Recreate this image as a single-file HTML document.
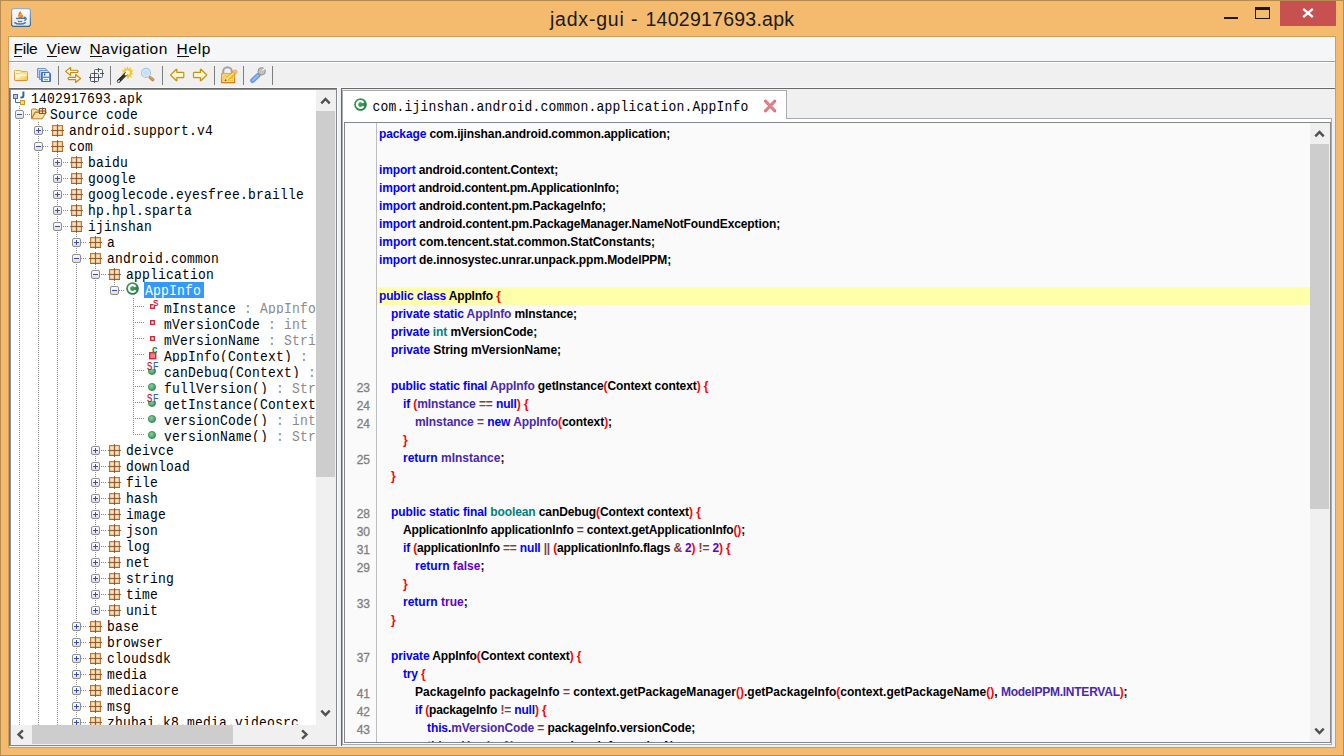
<!DOCTYPE html>
<html><head><meta charset="utf-8"><title>jadx-gui - 1402917693.apk</title>
<style>
*{box-sizing:border-box;margin:0;padding:0}
html,body{width:1344px;height:756px;overflow:hidden}
body{background:#f4ba6e;font-family:"Liberation Sans",sans-serif;position:relative}
.abs{position:absolute}
#frame{position:absolute;left:0;top:0;width:1344px;height:756px;border:1px solid #b68c50;pointer-events:none}
#title{position:absolute;left:0;top:0;width:1344px;height:37px}
#ttext{position:absolute;left:550px;top:6px;width:244px;height:26px;line-height:26px;font-size:19.5px;color:#1a1a1a;white-space:nowrap;text-align:left}
#menubar{position:absolute;left:9px;top:37px;width:1326px;height:24px;background:#f5f6f7}
.mi{position:absolute;top:0;height:24px;line-height:24px;font-size:15.5px;color:#000;white-space:nowrap}
.mi u{text-decoration:none;border-bottom:1px solid #000;padding-bottom:0px}
#mline{position:absolute;left:9px;top:61px;width:1326px;height:1px;background:#a0a0a0}
#toolbar{position:absolute;left:9px;top:62px;width:1326px;height:26px;background:#f0f0f0;border-top:1px solid #fff;border-bottom:1px solid #f9f9f9}
.sep{position:absolute;top:3px;width:1px;height:19px;background:#7e7e7e}
#main{position:absolute;left:9px;top:88px;width:1326px;height:659px;background:#f0f0f0}
.mono{font-family:"Liberation Mono",monospace;font-size:13px;letter-spacing:0.2px;white-space:pre;transform:scaleY(1.14);transform-origin:0 12px}
#tree{position:absolute;left:11px;top:90px;width:305px;height:635px;background:#fff;overflow:hidden}
.row{position:absolute;left:0;width:305px;height:16px;overflow:hidden}
.row span.t{position:absolute;top:1px;height:16px;line-height:17px;color:#000}
.row span.m{position:absolute;top:3px;height:16px;line-height:17px;color:#000}
.g{color:#8a8a8a}
.vl{position:absolute;width:1px;background-image:linear-gradient(#8c8c8c 50%,transparent 50%);background-size:1px 2px}
.hl{position:absolute;height:1px;background-image:linear-gradient(90deg,#8c8c8c 50%,transparent 50%);background-size:2px 1px}
svg{position:absolute;overflow:visible}
#code{position:absolute;left:345px;top:123px;width:965px;height:619px;background:#fafafa;overflow:hidden}
.cl{position:absolute;left:34px;height:18px;line-height:18px;font-size:12px;font-weight:bold;color:#000;white-space:pre}
.ln{position:absolute;left:0;width:25px;height:18px;line-height:18px;font-size:12px;color:#808080;-webkit-text-stroke:0.3px #808080;text-align:right;margin-top:2px}
.k{color:#0000ff}.t{}.ty{color:#008080}.p{color:#4a28ac}.l{color:#6400c8}.r{color:#ff0000}.o{color:#804040}
</style></head><body>

<svg width="0" height="0" style="position:absolute"><defs>
<linearGradient id="gh" x1="0" y1="0" x2="0" y2="1"><stop offset="0" stop-color="#ffffff"/><stop offset="1" stop-color="#dcdcdc"/></linearGradient>
<linearGradient id="gf" x1="0" y1="0" x2="0" y2="1"><stop offset="0" stop-color="#fdf0c0"/><stop offset="1" stop-color="#f0c860"/></linearGradient>
<linearGradient id="gar" x1="0" y1="0" x2="0" y2="1"><stop offset="0" stop-color="#fff6cc"/><stop offset="1" stop-color="#f5d67a"/></linearGradient>
<radialGradient id="gc" cx="0.4" cy="0.35" r="0.7"><stop offset="0" stop-color="#4aa862"/><stop offset="1" stop-color="#1f7a3a"/></radialGradient>
<radialGradient id="gm" cx="0.4" cy="0.35" r="0.7"><stop offset="0" stop-color="#8fd0a0"/><stop offset="1" stop-color="#2f9555"/></radialGradient>
<symbol id="pkg" viewBox="0 0 13 13"><rect x="1.5" y="1.5" width="10" height="10" fill="#eac08a" stroke="#c47c2c"/><rect x="1" y="11" width="11" height="1" fill="#b4601a"/><rect x="2.8" y="2.8" width="2.6" height="2.6" rx="0.6" fill="#f8e6c2"/><rect x="7.6" y="2.8" width="2.6" height="2.6" rx="0.6" fill="#f8e6c2"/><rect x="2.8" y="7.6" width="2.6" height="2.6" rx="0.6" fill="#f8e6c2"/><rect x="7.6" y="7.6" width="2.6" height="2.6" rx="0.6" fill="#f8e6c2"/><path d="M0 6.5H13M6.5 0V13" stroke="#8a4c2a" stroke-width="1" fill="none" opacity="0.85"/></symbol>
<symbol id="hp" viewBox="0 0 9 9"><rect x="0.5" y="0.5" width="8" height="8" rx="1.5" fill="url(#gh)" stroke="#8f8f8f"/><path d="M2 4.5H7M4.5 2V7" stroke="#3a50a8" stroke-width="1" fill="none"/></symbol>
<symbol id="hm" viewBox="0 0 9 9"><rect x="0.5" y="0.5" width="8" height="8" rx="1.5" fill="url(#gh)" stroke="#8f8f8f"/><path d="M2 4.5H7" stroke="#3a50a8" stroke-width="1" fill="none"/></symbol>
<symbol id="cls" viewBox="0 0 13 13"><circle cx="6.5" cy="6.5" r="6.3" fill="url(#gc)"/><path d="M9.5 4.7A3.5 3.5 0 1 0 9.5 8.3" stroke="#fff" stroke-width="2.2" fill="none"/></symbol>
<symbol id="mth" viewBox="0 0 8 8"><circle cx="4" cy="4" r="3.6" fill="url(#gm)" stroke="#2c8c4e" stroke-width="0.8"/></symbol>
</defs></svg>
<div id="title">
<svg style="left:11px;top:8px" width="20" height="19" viewBox="0 0 20 19">
<defs><linearGradient id="jb" x1="0" y1="0" x2="0" y2="1"><stop offset="0" stop-color="#93afcd"/><stop offset="1" stop-color="#3c658e"/></linearGradient>
<linearGradient id="jf" x1="0" y1="0" x2="0" y2="1"><stop offset="0" stop-color="#ffffff"/><stop offset="1" stop-color="#e6e6e8"/></linearGradient></defs>
<path d="M2 0.6H18L19.4 2V17L18 18.4H2L0.6 17V2Z" fill="url(#jf)" stroke="url(#jb)" stroke-width="1.2"/>
<path d="M9.8 2.8C7.6 4.2 6.6 7 7.6 9.9H11.6C12.2 8.8 11.4 7.8 12.2 6.8C11.2 7 10.5 6.4 11 5.3C10 5.1 9.5 4 9.8 2.8Z" fill="#e8811e"/>
<circle cx="10" cy="6.8" r="0.7" fill="#fbe3c8"/><circle cx="8.8" cy="8.4" r="0.5" fill="#f6c08a"/>
<path d="M5 10.4H14.6" stroke="#4b78a4" stroke-width="1.3" fill="none"/>
<path d="M4.6 10.4L6 9.8V11Z" fill="#4b78a4"/>
<path d="M12.6 9.3C15.8 8.8 15.8 12.2 13.2 12.4" stroke="#4b78a4" stroke-width="1.4" fill="none"/>
<path d="M6.4 11.4C6.8 12.6 7.4 13.2 8 13.4" stroke="#9ab2cc" stroke-width="0.8" fill="none"/>
<path d="M7 13.5H11.2" stroke="#4b78a4" stroke-width="1.2" fill="none"/>
<path d="M3.4 14.3C6.4 16.7 11.8 16.7 14.8 14.3" stroke="#4b78a4" stroke-width="1.5" fill="none"/>
</svg>
<div id="ttext"><span style="position:absolute;left:0;letter-spacing:0.78px">jadx-gui</span><span style="position:absolute;left:81px">-</span><span style="position:absolute;left:95.5px;letter-spacing:0.25px">1402917693.apk</span></div>
<div class="abs" style="left:1224px;top:17px;width:14px;height:2px;background:#1a1a1a"></div>
<div class="abs" style="left:1255px;top:7px;width:15px;height:12px;border:1px solid #1a1a1a;border-top-width:3px"></div>
<div class="abs" style="left:1280px;top:1px;width:56px;height:25px;background:#c75050"></div>
<svg style="left:1302px;top:8px" width="12" height="10" viewBox="0 0 12 10"><path d="M1.2 0.8L10.8 9.2M10.8 0.8L1.2 9.2" stroke="#fff" stroke-width="2.3" fill="none"/></svg>
</div>
<div class="abs" style="left:8px;top:36px;width:1328px;height:712px;border:1px solid #d09c56"></div>
<div id="menubar">
<span class="mi" style="left:4.6px;letter-spacing:-0.3px">File<i style="position:absolute;left:0.5px;top:19px;width:7.5px;height:1px;background:#111"></i></span>
<span class="mi" style="left:37.6px;letter-spacing:0.3px">View<i style="position:absolute;left:0.5px;top:19px;width:10px;height:1px;background:#111"></i></span>
<span class="mi" style="left:80.6px;letter-spacing:0.5px">Navigation<i style="position:absolute;left:0.5px;top:19px;width:11.5px;height:1px;background:#111"></i></span>
<span class="mi" style="left:167.6px;letter-spacing:0.63px">Help<i style="position:absolute;left:0.5px;top:19px;width:11.5px;height:1px;background:#111"></i></span>
</div><div id="mline"></div>
<div id="toolbar">
<div class="sep" style="left:49px"></div>
<div class="sep" style="left:101px"></div>
<div class="sep" style="left:153px"></div>
<div class="sep" style="left:205px"></div>
<div class="sep" style="left:234px"></div>
<div class="sep" style="left:263px"></div>
</div>
<svg style="left:0;top:0" width="300" height="92" viewBox="0 0 300 92">
<defs>
<linearGradient id="gfo" x1="0" y1="0" x2="0" y2="1"><stop offset="0" stop-color="#e9ae45"/><stop offset="1" stop-color="#e08c34"/></linearGradient>
<linearGradient id="gfi" x1="0" y1="0" x2="1" y2="1"><stop offset="0" stop-color="#fffdf2"/><stop offset="0.45" stop-color="#fbeeb0"/><stop offset="1" stop-color="#edc630"/></linearGradient>
<linearGradient id="gar2" x1="0" y1="0" x2="0" y2="1"><stop offset="0" stop-color="#fbe8a4"/><stop offset="0.45" stop-color="#fffbe6"/><stop offset="1" stop-color="#f7d772"/></linearGradient>
<linearGradient id="glk" x1="0" y1="0" x2="0" y2="1"><stop offset="0" stop-color="#ecaa2c"/><stop offset="1" stop-color="#df7a10"/></linearGradient>
<radialGradient id="glens" cx="0.5" cy="0.5" r="0.6"><stop offset="0" stop-color="#c3dbf5"/><stop offset="1" stop-color="#d3e5f8"/></radialGradient>
</defs>
<!-- open folder -->
<path d="M14.5 71.2Q14.5 70.5 15.2 70.5H20.3Q21 70.5 21 71.2V71.5H26.8Q27.5 71.5 27.5 72.2V79.8Q27.5 80.5 26.8 80.5H15.2Q14.5 80.5 14.5 79.8Z" fill="url(#gfi)" stroke="url(#gfo)" stroke-width="1"/>
<path d="M16 73.5H19.5L20.5 72.8H26" stroke="#f3cf74" stroke-width="1" fill="none"/>
<path d="M15.5 76.2H19.5L20.5 75.2H26.5" stroke="#fff" stroke-width="1" fill="none" opacity="0.9"/>
<!-- save all -->
<path d="M37.5 68.5H45.5L46.5 69.5V77.5H37.5Z" fill="#b8cdf0" stroke="#6d95d8"/>
<path d="M38.8 70H45" stroke="#eef3fc" stroke-width="1"/>
<path d="M39.5 70.5H47.5L48.5 71.5V79.5H39.5Z" fill="#b8cdf0" stroke="#6d95d8"/>
<path d="M40.8 72H47" stroke="#eef3fc" stroke-width="1"/>
<path d="M41.5 72.5H49.3L50.5 73.7V81.5H41.5Z" fill="#5c8cdc" stroke="#3f6ec4"/>
<rect x="43" y="73" width="6" height="3.6" fill="#f2f6fd"/>
<rect x="44" y="73.4" width="1.3" height="2.2" fill="#2f5cb4"/>
<rect x="43" y="78" width="6" height="3" fill="#f4f7fc"/>
<rect x="44" y="79" width="4" height="1.3" fill="#86c83c"/>
<!-- sync -->
<path d="M65.6 71.4L70.6 67.4V70.3H77.4L78.2 71.4L77.4 72.5H70.6V75.4Z" fill="url(#gar2)" stroke="#c48a10" stroke-width="1.1" stroke-linejoin="round"/>
<path d="M80.6 78.5L75.6 74.5V77.4H68.8L68 78.5L68.8 79.6H75.6V82.5Z" fill="url(#gar2)" stroke="#c48a10" stroke-width="1.1" stroke-linejoin="round"/>
<!-- flatten packages -->
<rect x="94.5" y="69.5" width="8" height="8" rx="1" fill="#edf2fc" stroke="#606060"/>
<path d="M98.5 68V72M100 73.5H104" stroke="#505050" stroke-width="1"/>
<rect x="90.5" y="73.5" width="8" height="8" rx="1" fill="#eef3fc" stroke="#555"/>
<path d="M94.5 72V83M89 77.5H100" stroke="#505050" stroke-width="1"/>
<!-- wand -->
<path d="M127.6 66.6L128.7 69.6L131 67.6L130.5 70.6L133 70.2L131.2 72.4L133 74L130.6 74.4L131.4 77.2L129 75.8L128 78.8L126.6 76L124.2 77.4L124.8 74.6L121.8 74.2L124 72.4L122 70.2L125 70.4L124.6 67.6L126.8 69.4Z" fill="#f7c61e" stroke="#f3b50c" stroke-width="0.3"/>
<circle cx="127.6" cy="72.6" r="2.4" fill="#fdf3c4"/>
<path d="M118.6 81.2L126 73.9" stroke="#262626" stroke-width="3.4" stroke-linecap="round"/>
<path d="M118.4 81.6L119.2 80.8" stroke="#e8e8e8" stroke-width="1.6" stroke-linecap="round"/>
<path d="M120.6 79.9L125 75.5" stroke="#6a6a6a" stroke-width="1" stroke-dasharray="0.7 0.7"/>
<path d="M125.8 74.3L127.2 72.9" stroke="#fafafa" stroke-width="2.4" stroke-linecap="round"/>
<!-- magnifier -->
<path d="M150 77.4L152.8 79.8" stroke="#c58a3e" stroke-width="3.2" stroke-linecap="round"/>
<path d="M150.4 77.2L152.6 79.2" stroke="#e2b87e" stroke-width="1" stroke-linecap="round"/>
<circle cx="146" cy="72.9" r="4.5" fill="url(#glens)" stroke="#a4c6ee" stroke-width="1.2"/>
<circle cx="146" cy="72.9" r="3.4" fill="none" stroke="#e1edfa" stroke-width="0.6"/>
<!-- back / forward -->
<path d="M170.5 75L176.4 69.3H176.9V72.4H183.3L183.8 72.9V77.1L183.3 77.6H176.9V80.7H176.4Z" fill="url(#gar2)" stroke="#c4940f" stroke-width="1.2" stroke-linejoin="round"/>
<path d="M206.8 75L200.9 69.3H200.4V72.4H194L193.5 72.9V77.1L194 77.6H200.4V80.7H200.9Z" fill="url(#gar2)" stroke="#c4940f" stroke-width="1.2" stroke-linejoin="round"/>
<!-- lock + pencil -->
<path d="M223.2 73.6V71.6A4.3 4.3 0 0 1 231.8 71.6V73.6" fill="none" stroke="#a2a2a2" stroke-width="2.1"/>
<rect x="221.6" y="73.6" width="13" height="9" fill="#fbe494" stroke="url(#glk)" stroke-width="1.3"/>
<rect x="223.2" y="75.2" width="9.8" height="5.8" fill="#f6c64a"/>
<path d="M224 79.4H232.4M224 77.2H228" stroke="#fbe7a6" stroke-width="0.8"/>
<path d="M227.4 78.8L234.4 72.6" stroke="#d79a22" stroke-width="3.8"/>
<path d="M227.4 78.8L234.4 72.6" stroke="#f5d646" stroke-width="2.3"/>
<path d="M227.2 78.2L233.8 72.4" stroke="#fbf1a4" stroke-width="0.8"/>
<circle cx="235.2" cy="71.8" r="1.8" fill="#f5bda2" stroke="#e8964a" stroke-width="0.8"/>
<path d="M224.8 80.8L226.2 77.6L228.8 80Z" fill="#f3d2b4"/>
<path d="M224.7 80.9L225.5 79.2L226.6 80.2Z" fill="#241a12"/>
<!-- wrench -->
<path d="M252.6 80.6L258.2 75.2" stroke="#5f96e6" stroke-width="4.8" stroke-linecap="round"/>
<path d="M252.8 80.4L258 75.4" stroke="#92b9f2" stroke-width="2.2" stroke-linecap="round"/>
<path d="M258.6 75.4L260.4 73.6" stroke="#9c9c9c" stroke-width="2.4"/>
<circle cx="261.7" cy="71.3" r="3.7" fill="#c2c2c2" stroke="#8a8a8a" stroke-width="0.9"/>
<path d="M262.3 70.7L266.4 66.6" stroke="#f0f0f0" stroke-width="2.5"/>
<path d="M261.6 69.9L263.6 67.9M263.1 71.4L265.1 69.4" stroke="#8a8a8a" stroke-width="0.7"/>
</svg>
<div id="main"></div>
<div class="abs" style="left:9px;top:88px;width:329px;height:1px;background:#696969"></div>
<div class="abs" style="left:9px;top:89px;width:328px;height:1px;background:#8f949b"></div>
<div class="abs" style="left:9px;top:88px;width:1px;height:658px;background:#6a7280"></div>
<div class="abs" style="left:10px;top:89px;width:1px;height:656px;background:#8e95a0"></div>
<div class="abs" style="left:11px;top:90px;width:325px;height:655px;background:#fff"></div>
<div class="abs" style="left:336px;top:89px;width:1px;height:657px;background:#828790"></div>
<div class="abs" style="left:337px;top:88px;width:1px;height:658px;background:#fcfcfc"></div>
<div class="abs" style="left:10px;top:745px;width:327px;height:1px;background:#828790"></div>
<div id="tree">
<div class="vl" style="left:8px;top:16px;height:4px"></div>
<div class="vl" style="left:8px;top:30px;height:605px"></div>
<div class="vl" style="left:27px;top:32px;height:603px"></div>
<div class="vl" style="left:46px;top:64px;height:571px"></div>
<div class="vl" style="left:65px;top:144px;height:491px"></div>
<div class="vl" style="left:84px;top:176px;height:348px"></div>
<div class="vl" style="left:103px;top:192px;height:4px"></div>
<div class="vl" style="left:122px;top:208px;height:137px"></div>
<div class="hl" style="left:14px;top:24px;width:5px"></div>
<div class="hl" style="left:32px;top:40px;width:6px"></div>
<div class="hl" style="left:32px;top:56px;width:6px"></div>
<div class="hl" style="left:52px;top:72px;width:5px"></div>
<div class="hl" style="left:52px;top:88px;width:5px"></div>
<div class="hl" style="left:52px;top:104px;width:5px"></div>
<div class="hl" style="left:52px;top:120px;width:5px"></div>
<div class="hl" style="left:52px;top:136px;width:5px"></div>
<div class="hl" style="left:70px;top:152px;width:6px"></div>
<div class="hl" style="left:70px;top:168px;width:6px"></div>
<div class="hl" style="left:90px;top:184px;width:5px"></div>
<div class="hl" style="left:108px;top:200px;width:6px"></div>
<div class="hl" style="left:124px;top:216px;width:10px"></div>
<div class="hl" style="left:124px;top:232px;width:10px"></div>
<div class="hl" style="left:124px;top:248px;width:10px"></div>
<div class="hl" style="left:124px;top:264px;width:10px"></div>
<div class="hl" style="left:124px;top:280px;width:10px"></div>
<div class="hl" style="left:124px;top:296px;width:10px"></div>
<div class="hl" style="left:124px;top:312px;width:10px"></div>
<div class="hl" style="left:124px;top:328px;width:10px"></div>
<div class="hl" style="left:124px;top:344px;width:10px"></div>
<div class="hl" style="left:90px;top:360px;width:5px"></div>
<div class="hl" style="left:90px;top:376px;width:5px"></div>
<div class="hl" style="left:90px;top:392px;width:5px"></div>
<div class="hl" style="left:90px;top:408px;width:5px"></div>
<div class="hl" style="left:90px;top:424px;width:5px"></div>
<div class="hl" style="left:90px;top:440px;width:5px"></div>
<div class="hl" style="left:90px;top:456px;width:5px"></div>
<div class="hl" style="left:90px;top:472px;width:5px"></div>
<div class="hl" style="left:90px;top:488px;width:5px"></div>
<div class="hl" style="left:90px;top:504px;width:5px"></div>
<div class="hl" style="left:90px;top:520px;width:5px"></div>
<div class="hl" style="left:70px;top:536px;width:6px"></div>
<div class="hl" style="left:70px;top:552px;width:6px"></div>
<div class="hl" style="left:70px;top:568px;width:6px"></div>
<div class="hl" style="left:70px;top:584px;width:6px"></div>
<div class="hl" style="left:70px;top:600px;width:6px"></div>
<div class="hl" style="left:70px;top:616px;width:6px"></div>
<div class="hl" style="left:70px;top:632px;width:6px"></div>
<div class="row" style="top:0px">
<svg style="left:1px;top:1px" width="14" height="15" viewBox="0 0 14 15"><rect x="1.5" y="3.5" width="4" height="4" fill="#b9c6de" stroke="#4a6fa8"/><path d="M3.5 8V11.5H8" stroke="#3b6cb0" fill="none"/><rect x="8.5" y="9.5" width="4" height="4" fill="#f5d878" stroke="#c99a20"/><path d="M11.4 0.4V4.6Q11.4 6.6 9.6 6.6H8.4" stroke="#2d66a8" stroke-width="2" fill="none"/></svg>
<span class="t mono" style="left:20px">1402917693.apk</span>
</div>
<div class="row" style="top:16px">
<svg style="left:4px;top:4px" width="9" height="9"><use href="#hm"/></svg>
<svg style="left:20px;top:1px" width="16" height="13" viewBox="0 0 16 13"><path d="M0.5 11.5V3Q0.5 2 1.5 2H5L6 3H10V5H4L0.5 11.5Z" fill="#f7dfa0" stroke="#c07a2c" stroke-linejoin="round"/><path d="M0.8 11.8L4.4 5.4H15.4L11.2 11.8Z" fill="#f9e2a4" stroke="#c07a2c" stroke-linejoin="round"/><rect x="8.5" y="1.5" width="6" height="5" fill="#f6e0b4" stroke="#8d5430"/><path d="M7.5 4H15.5M11.5 0.5V7" stroke="#8d5430"/></svg>
<span class="t mono" style="left:39px">Source code</span>
</div>
<div class="row" style="top:32px">
<svg style="left:23px;top:4px" width="9" height="9"><use href="#hp"/></svg>
<svg style="left:40px;top:2px" width="13" height="13"><use href="#pkg"/></svg>
<span class="t mono" style="left:58px">android.support.v4</span>
</div>
<div class="row" style="top:48px">
<svg style="left:23px;top:4px" width="9" height="9"><use href="#hm"/></svg>
<svg style="left:40px;top:2px" width="13" height="13"><use href="#pkg"/></svg>
<span class="t mono" style="left:58px">com</span>
</div>
<div class="row" style="top:64px">
<svg style="left:42px;top:4px" width="9" height="9"><use href="#hp"/></svg>
<svg style="left:59px;top:2px" width="13" height="13"><use href="#pkg"/></svg>
<span class="t mono" style="left:77px">baidu</span>
</div>
<div class="row" style="top:80px">
<svg style="left:42px;top:4px" width="9" height="9"><use href="#hp"/></svg>
<svg style="left:59px;top:2px" width="13" height="13"><use href="#pkg"/></svg>
<span class="t mono" style="left:77px">google</span>
</div>
<div class="row" style="top:96px">
<svg style="left:42px;top:4px" width="9" height="9"><use href="#hp"/></svg>
<svg style="left:59px;top:2px" width="13" height="13"><use href="#pkg"/></svg>
<span class="t mono" style="left:77px">googlecode.eyesfree.braille</span>
</div>
<div class="row" style="top:112px">
<svg style="left:42px;top:4px" width="9" height="9"><use href="#hp"/></svg>
<svg style="left:59px;top:2px" width="13" height="13"><use href="#pkg"/></svg>
<span class="t mono" style="left:77px">hp.hpl.sparta</span>
</div>
<div class="row" style="top:128px">
<svg style="left:42px;top:4px" width="9" height="9"><use href="#hm"/></svg>
<svg style="left:59px;top:2px" width="13" height="13"><use href="#pkg"/></svg>
<span class="t mono" style="left:77px">ijinshan</span>
</div>
<div class="row" style="top:144px">
<svg style="left:61px;top:4px" width="9" height="9"><use href="#hp"/></svg>
<svg style="left:78px;top:2px" width="13" height="13"><use href="#pkg"/></svg>
<span class="t mono" style="left:96px">a</span>
</div>
<div class="row" style="top:160px">
<svg style="left:61px;top:4px" width="9" height="9"><use href="#hm"/></svg>
<svg style="left:78px;top:2px" width="13" height="13"><use href="#pkg"/></svg>
<span class="t mono" style="left:96px">android.common</span>
</div>
<div class="row" style="top:176px">
<svg style="left:80px;top:4px" width="9" height="9"><use href="#hm"/></svg>
<svg style="left:97px;top:2px" width="13" height="13"><use href="#pkg"/></svg>
<span class="t mono" style="left:115px">application</span>
</div>
<div class="row" style="top:192px">
<svg style="left:99px;top:4px" width="9" height="9"><use href="#hm"/></svg>
<svg style="left:115px;top:0px" width="13" height="13"><use href="#cls"/></svg>
<span class="abs" style="left:133px;top:0;width:60px;height:16px;background:#3399ff"></span>
<span class="t mono" style="left:134px;color:#fff">AppInfo</span>
</div>
<div class="row" style="top:208px">
<svg style="left:138px;top:1px" width="10" height="12" viewBox="0 0 10 12"><rect x="1.7" y="5.7" width="3.6" height="3.6" fill="#fff" stroke="#d8283c" stroke-width="1.4"/></svg>
<span class="abs" style="left:141.6px;top:0px;font-size:9.8px;color:#c8102e;-webkit-text-stroke:0.25px #c8102e;line-height:9px;height:8px;background:#fff;transform:scaleX(0.82);transform-origin:0 0">S</span>
<span class="m mono" style="left:153px">mInstance<span class="g"> : AppInfo</span></span>
</div>
<div class="row" style="top:224px">
<svg style="left:138px;top:1px" width="10" height="12" viewBox="0 0 10 12"><rect x="1.7" y="5.7" width="3.6" height="3.6" fill="#fff" stroke="#d8283c" stroke-width="1.4"/></svg>
<span class="m mono" style="left:153px">mVersionCode<span class="g"> : int</span></span>
</div>
<div class="row" style="top:240px">
<svg style="left:138px;top:1px" width="10" height="12" viewBox="0 0 10 12"><rect x="1.7" y="5.7" width="3.6" height="3.6" fill="#fff" stroke="#d8283c" stroke-width="1.4"/></svg>
<span class="m mono" style="left:153px">mVersionName<span class="g"> : String</span></span>
</div>
<div class="row" style="top:256px">
<svg style="left:138px;top:0px" width="10" height="14" viewBox="0 0 10 14"><rect x="0.7" y="6.7" width="6" height="6" fill="#f08090" stroke="#d8283c" stroke-width="1.4"/></svg>
<span class="abs" style="left:140.8px;top:-2px;font-size:11px;font-weight:bold;color:#0a8a2a;line-height:11px;height:10px;transform:scaleX(0.88);transform-origin:0 0">c</span>
<span class="m mono" style="left:153px">AppInfo(Context)<span class="g"> : void</span></span>
</div>
<div class="row" style="top:272px">
<svg style="left:137px;top:5px" width="8" height="8"><use href="#mth"/></svg>
<span class="abs" style="left:135px;top:-1px;width:12px;height:8px;background:#fff"></span>
<span class="abs" style="left:135.6px;top:0px;font-size:10px;color:#c8102e;-webkit-text-stroke:0.25px #c8102e;line-height:9px;letter-spacing:1px;transform:scaleX(0.8);transform-origin:0 0">S<span style="color:#2a5ca8;-webkit-text-stroke:0.25px #2a5ca8">F</span></span>
<span class="m mono" style="left:153px">canDebug(Context)<span class="g"> : boolean</span></span>
</div>
<div class="row" style="top:288px">
<svg style="left:137px;top:5px" width="8" height="8"><use href="#mth"/></svg>
<span class="m mono" style="left:153px">fullVersion()<span class="g"> : String</span></span>
</div>
<div class="row" style="top:304px">
<svg style="left:137px;top:5px" width="8" height="8"><use href="#mth"/></svg>
<span class="abs" style="left:135px;top:-1px;width:12px;height:8px;background:#fff"></span>
<span class="abs" style="left:135.6px;top:0px;font-size:10px;color:#c8102e;-webkit-text-stroke:0.25px #c8102e;line-height:9px;letter-spacing:1px;transform:scaleX(0.8);transform-origin:0 0">S<span style="color:#2a5ca8;-webkit-text-stroke:0.25px #2a5ca8">F</span></span>
<span class="m mono" style="left:153px">getInstance(Context)<span class="g"> : AppInfo</span></span>
</div>
<div class="row" style="top:320px">
<svg style="left:137px;top:5px" width="8" height="8"><use href="#mth"/></svg>
<span class="m mono" style="left:153px">versionCode()<span class="g"> : int</span></span>
</div>
<div class="row" style="top:336px">
<svg style="left:137px;top:5px" width="8" height="8"><use href="#mth"/></svg>
<span class="m mono" style="left:153px">versionName()<span class="g"> : String</span></span>
</div>
<div class="row" style="top:352px">
<svg style="left:80px;top:4px" width="9" height="9"><use href="#hp"/></svg>
<svg style="left:97px;top:2px" width="13" height="13"><use href="#pkg"/></svg>
<span class="t mono" style="left:115px">deivce</span>
</div>
<div class="row" style="top:368px">
<svg style="left:80px;top:4px" width="9" height="9"><use href="#hp"/></svg>
<svg style="left:97px;top:2px" width="13" height="13"><use href="#pkg"/></svg>
<span class="t mono" style="left:115px">download</span>
</div>
<div class="row" style="top:384px">
<svg style="left:80px;top:4px" width="9" height="9"><use href="#hp"/></svg>
<svg style="left:97px;top:2px" width="13" height="13"><use href="#pkg"/></svg>
<span class="t mono" style="left:115px">file</span>
</div>
<div class="row" style="top:400px">
<svg style="left:80px;top:4px" width="9" height="9"><use href="#hp"/></svg>
<svg style="left:97px;top:2px" width="13" height="13"><use href="#pkg"/></svg>
<span class="t mono" style="left:115px">hash</span>
</div>
<div class="row" style="top:416px">
<svg style="left:80px;top:4px" width="9" height="9"><use href="#hp"/></svg>
<svg style="left:97px;top:2px" width="13" height="13"><use href="#pkg"/></svg>
<span class="t mono" style="left:115px">image</span>
</div>
<div class="row" style="top:432px">
<svg style="left:80px;top:4px" width="9" height="9"><use href="#hp"/></svg>
<svg style="left:97px;top:2px" width="13" height="13"><use href="#pkg"/></svg>
<span class="t mono" style="left:115px">json</span>
</div>
<div class="row" style="top:448px">
<svg style="left:80px;top:4px" width="9" height="9"><use href="#hp"/></svg>
<svg style="left:97px;top:2px" width="13" height="13"><use href="#pkg"/></svg>
<span class="t mono" style="left:115px">log</span>
</div>
<div class="row" style="top:464px">
<svg style="left:80px;top:4px" width="9" height="9"><use href="#hp"/></svg>
<svg style="left:97px;top:2px" width="13" height="13"><use href="#pkg"/></svg>
<span class="t mono" style="left:115px">net</span>
</div>
<div class="row" style="top:480px">
<svg style="left:80px;top:4px" width="9" height="9"><use href="#hp"/></svg>
<svg style="left:97px;top:2px" width="13" height="13"><use href="#pkg"/></svg>
<span class="t mono" style="left:115px">string</span>
</div>
<div class="row" style="top:496px">
<svg style="left:80px;top:4px" width="9" height="9"><use href="#hp"/></svg>
<svg style="left:97px;top:2px" width="13" height="13"><use href="#pkg"/></svg>
<span class="t mono" style="left:115px">time</span>
</div>
<div class="row" style="top:512px">
<svg style="left:80px;top:4px" width="9" height="9"><use href="#hp"/></svg>
<svg style="left:97px;top:2px" width="13" height="13"><use href="#pkg"/></svg>
<span class="t mono" style="left:115px">unit</span>
</div>
<div class="row" style="top:528px">
<svg style="left:61px;top:4px" width="9" height="9"><use href="#hp"/></svg>
<svg style="left:78px;top:2px" width="13" height="13"><use href="#pkg"/></svg>
<span class="t mono" style="left:96px">base</span>
</div>
<div class="row" style="top:544px">
<svg style="left:61px;top:4px" width="9" height="9"><use href="#hp"/></svg>
<svg style="left:78px;top:2px" width="13" height="13"><use href="#pkg"/></svg>
<span class="t mono" style="left:96px">browser</span>
</div>
<div class="row" style="top:560px">
<svg style="left:61px;top:4px" width="9" height="9"><use href="#hp"/></svg>
<svg style="left:78px;top:2px" width="13" height="13"><use href="#pkg"/></svg>
<span class="t mono" style="left:96px">cloudsdk</span>
</div>
<div class="row" style="top:576px">
<svg style="left:61px;top:4px" width="9" height="9"><use href="#hp"/></svg>
<svg style="left:78px;top:2px" width="13" height="13"><use href="#pkg"/></svg>
<span class="t mono" style="left:96px">media</span>
</div>
<div class="row" style="top:592px">
<svg style="left:61px;top:4px" width="9" height="9"><use href="#hp"/></svg>
<svg style="left:78px;top:2px" width="13" height="13"><use href="#pkg"/></svg>
<span class="t mono" style="left:96px">mediacore</span>
</div>
<div class="row" style="top:608px">
<svg style="left:61px;top:4px" width="9" height="9"><use href="#hp"/></svg>
<svg style="left:78px;top:2px" width="13" height="13"><use href="#pkg"/></svg>
<span class="t mono" style="left:96px">msg</span>
</div>
<div class="row" style="top:624px">
<svg style="left:61px;top:4px" width="9" height="9"><use href="#hp"/></svg>
<svg style="left:78px;top:2px" width="13" height="13"><use href="#pkg"/></svg>
<span class="t mono" style="left:96px">zhuhai.k8.media.videosrc</span>
</div>
</div>
<div class="abs" style="left:316px;top:90px;width:20px;height:655px;background:#f0f0f0"></div>
<div class="abs" style="left:316px;top:111px;width:19px;height:366px;background:#cdcdcd"></div>
<svg style="left:0;top:0" width="1" height="1"><path d="M321.3 103.3L325.5 98.9L329.7 103.3" stroke="#505050" stroke-width="2.4" fill="none"/></svg>
<svg style="left:0;top:0" width="1" height="1"><path d="M321.3 710.7L325.5 715.1L329.7 710.7" stroke="#505050" stroke-width="2.4" fill="none"/></svg>
<div class="abs" style="left:11px;top:725px;width:305px;height:20px;background:#f0f0f0"></div>
<div class="abs" style="left:32px;top:725px;width:201px;height:19px;background:#cdcdcd"></div>
<svg style="left:0;top:0" width="1" height="1"><path d="M22.9 730.3L18.5 734.5L22.9 738.7" stroke="#505050" stroke-width="2.4" fill="none"/></svg>
<svg style="left:0;top:0" width="1" height="1"><path d="M302.1 730.3L306.5 734.5L302.1 738.7" stroke="#505050" stroke-width="2.4" fill="none"/></svg>
<div class="abs" style="left:341px;top:88px;width:994px;height:1px;background:#696969"></div>
<div class="abs" style="left:341px;top:88px;width:1px;height:658px;background:#696969"></div>
<div class="abs" style="left:342px;top:118px;width:990px;height:627px;background:#fff;border:1px solid #a8aab0"></div>
<div class="abs" style="left:342px;top:90px;width:445px;height:29px;background:#fff;border:1px solid #a8aab0;border-bottom:none"></div>
<svg style="left:354px;top:98px" width="13" height="13"><use href="#cls"/></svg>
<div class="abs mono" style="left:372.5px;top:99px;height:16px;line-height:17px;color:#000">com.ijinshan.android.common.application.AppInfo</div>
<svg style="left:764px;top:100px" width="12" height="12" viewBox="0 0 12 12"><path d="M1.5 1.2L10.7 10.8M10.7 1.2L1.5 10.8" stroke="#dd6f77" stroke-width="3.1" fill="none" stroke-linecap="round"/><path d="M2 1.8L10.2 10.2M10.2 1.8L2 10.2" stroke="#e58a90" stroke-width="1.2" fill="none" stroke-linecap="round"/></svg>
<div class="abs" style="left:344px;top:122px;width:987px;height:621px;border:1px solid #828790;background:#fafafa"></div>
<div id="code">
<div class="abs" style="left:31px;top:0;width:1px;height:619px;background:#bdbdbd"></div>
<div class="abs" style="left:32px;top:164px;width:933px;height:18px;background:#ffffaa"></div>
<div class="cl" style="top:2px;left:34px;letter-spacing:-0.104px"><span class="k">package</span> com.ijinshan.android.common.application;</div>
<div class="cl" style="top:38px;left:34px;letter-spacing:-0.14px"><span class="k">import</span> android.content.Context;</div>
<div class="cl" style="top:56px;left:34px;letter-spacing:-0.174px"><span class="k">import</span> android.content.pm.ApplicationInfo;</div>
<div class="cl" style="top:74px;left:34px;letter-spacing:-0.097px"><span class="k">import</span> android.content.pm.PackageInfo;</div>
<div class="cl" style="top:92px;left:34px;letter-spacing:-0.1px"><span class="k">import</span> android.content.pm.PackageManager.NameNotFoundException;</div>
<div class="cl" style="top:110px;left:34px;letter-spacing:-0.044px"><span class="k">import</span> com.tencent.stat.common.StatConstants;</div>
<div class="cl" style="top:128px;left:34px;letter-spacing:-0.085px"><span class="k">import</span> de.innosystec.unrar.unpack.ppm.ModelPPM;</div>
<div class="cl" style="top:164px;left:34px;letter-spacing:-0.145px"><span class="k">public class</span> AppInfo <span class="r">{</span></div>
<div class="cl" style="top:182px;left:46px;letter-spacing:-0.09px"><span class="k">private static</span> <span class="p">AppInfo</span> mInstance;</div>
<div class="cl" style="top:200px;left:46px;letter-spacing:-0.108px"><span class="k">private</span> <span class="ty">int</span> mVersionCode;</div>
<div class="cl" style="top:218px;left:46px;letter-spacing:-0.05px"><span class="k">private</span> String mVersionName;</div>
<div class="ln" style="top:254px">23</div>
<div class="cl" style="top:254px;left:46px;letter-spacing:-0.097px"><span class="k">public static final</span> <span class="p">AppInfo</span> getInstance<span class="r">(</span>Context context<span class="r">)</span> <span class="r">{</span></div>
<div class="ln" style="top:272px">24</div>
<div class="cl" style="top:272px;left:58px;letter-spacing:-0.108px"><span class="k">if</span> <span class="r">(</span><span class="p">mInstance</span> <span class="o">==</span> <span class="k">null</span><span class="r">)</span> <span class="r">{</span></div>
<div class="ln" style="top:290px">24</div>
<div class="cl" style="top:290px;left:70px;letter-spacing:-0.07px"><span class="p">mInstance</span> <span class="o">=</span> <span class="k">new</span> <span class="p">AppInfo</span><span class="r">(</span>context<span class="r">)</span>;</div>
<div class="cl" style="top:308px;left:58px;letter-spacing:0px"><span class="r">}</span></div>
<div class="ln" style="top:326px">25</div>
<div class="cl" style="top:326px;left:58px;letter-spacing:0px"><span class="k">return</span> <span class="p">mInstance</span>;</div>
<div class="cl" style="top:344px;left:46px;letter-spacing:0px"><span class="r">}</span></div>
<div class="ln" style="top:380px">28</div>
<div class="cl" style="top:380px;left:46px;letter-spacing:-0.104px"><span class="k">public static final</span> <span class="ty">boolean</span> canDebug<span class="r">(</span>Context context<span class="r">)</span> <span class="r">{</span></div>
<div class="ln" style="top:398px">30</div>
<div class="cl" style="top:398px;left:58px;letter-spacing:-0.175px">ApplicationInfo applicationInfo <span class="o">=</span> context.getApplicationInfo<span class="r">()</span>;</div>
<div class="ln" style="top:416px">31</div>
<div class="cl" style="top:416px;left:58px;letter-spacing:-0.168px"><span class="k">if</span> <span class="r">(</span>applicationInfo <span class="o">==</span> <span class="k">null</span> <span class="o">||</span> <span class="r">(</span>applicationInfo.flags <span class="o">&amp;</span> <span class="l">2</span><span class="r">)</span> <span class="o">!=</span> <span class="l">2</span><span class="r">)</span> <span class="r">{</span></div>
<div class="ln" style="top:434px">29</div>
<div class="cl" style="top:434px;left:70px;letter-spacing:0px"><span class="k">return</span> <span class="l">false</span>;</div>
<div class="cl" style="top:452px;left:58px;letter-spacing:0px"><span class="r">}</span></div>
<div class="ln" style="top:470px">33</div>
<div class="cl" style="top:470px;left:58px;letter-spacing:0px"><span class="k">return</span> <span class="l">true</span>;</div>
<div class="cl" style="top:488px;left:46px;letter-spacing:0px"><span class="r">}</span></div>
<div class="ln" style="top:524px">37</div>
<div class="cl" style="top:524px;left:46px;letter-spacing:-0.115px"><span class="k">private</span> AppInfo<span class="r">(</span>Context context<span class="r">)</span> <span class="r">{</span></div>
<div class="cl" style="top:542px;left:58px;letter-spacing:-0.2px"><span class="k">try</span> <span class="r">{</span></div>
<div class="ln" style="top:560px">41</div>
<div class="cl" style="top:560px;left:70px;letter-spacing:0.021px">PackageInfo packageInfo <span class="o">=</span> context.getPackageManager<span class="r">()</span>.getPackageInfo<span class="r">(</span>context.getPackageName<span class="r">()</span>, <span style="letter-spacing:-0.24px"><span class="p">ModelPPM.INTERVAL</span><span class="r">)</span>;</span></div>
<div class="ln" style="top:578px">42</div>
<div class="cl" style="top:578px;left:70px;letter-spacing:-0.167px"><span class="k">if</span> <span class="r">(</span>packageInfo <span class="o">!=</span> <span class="k">null</span><span class="r">)</span> <span class="r">{</span></div>
<div class="ln" style="top:596px">43</div>
<div class="cl" style="top:596px;left:82px;letter-spacing:-0.098px"><span class="k">this</span>.<span class="p">mVersionCode</span> <span class="o">=</span> packageInfo.versionCode;</div>
<div class="cl" style="top:614px;left:82px;letter-spacing:-0.098px"><span class="k">this</span>.<span class="p">mVersionName</span> <span class="o">=</span> packageInfo.versionName;</div>
</div>
<div class="abs" style="left:1310px;top:123px;width:20px;height:619px;background:#f0f0f0"></div>
<div class="abs" style="left:1310px;top:144px;width:19px;height:365px;background:#cdcdcd"></div>
<svg style="left:0;top:0" width="1" height="1"><path d="M1315.3 136.3L1319.5 131.9L1323.7 136.3" stroke="#505050" stroke-width="2.4" fill="none"/></svg>
<svg style="left:0;top:0" width="1" height="1"><path d="M1315.3 728.7L1319.5 733.1L1323.7 728.7" stroke="#505050" stroke-width="2.4" fill="none"/></svg>
<div id="frame"></div>
</body></html>
